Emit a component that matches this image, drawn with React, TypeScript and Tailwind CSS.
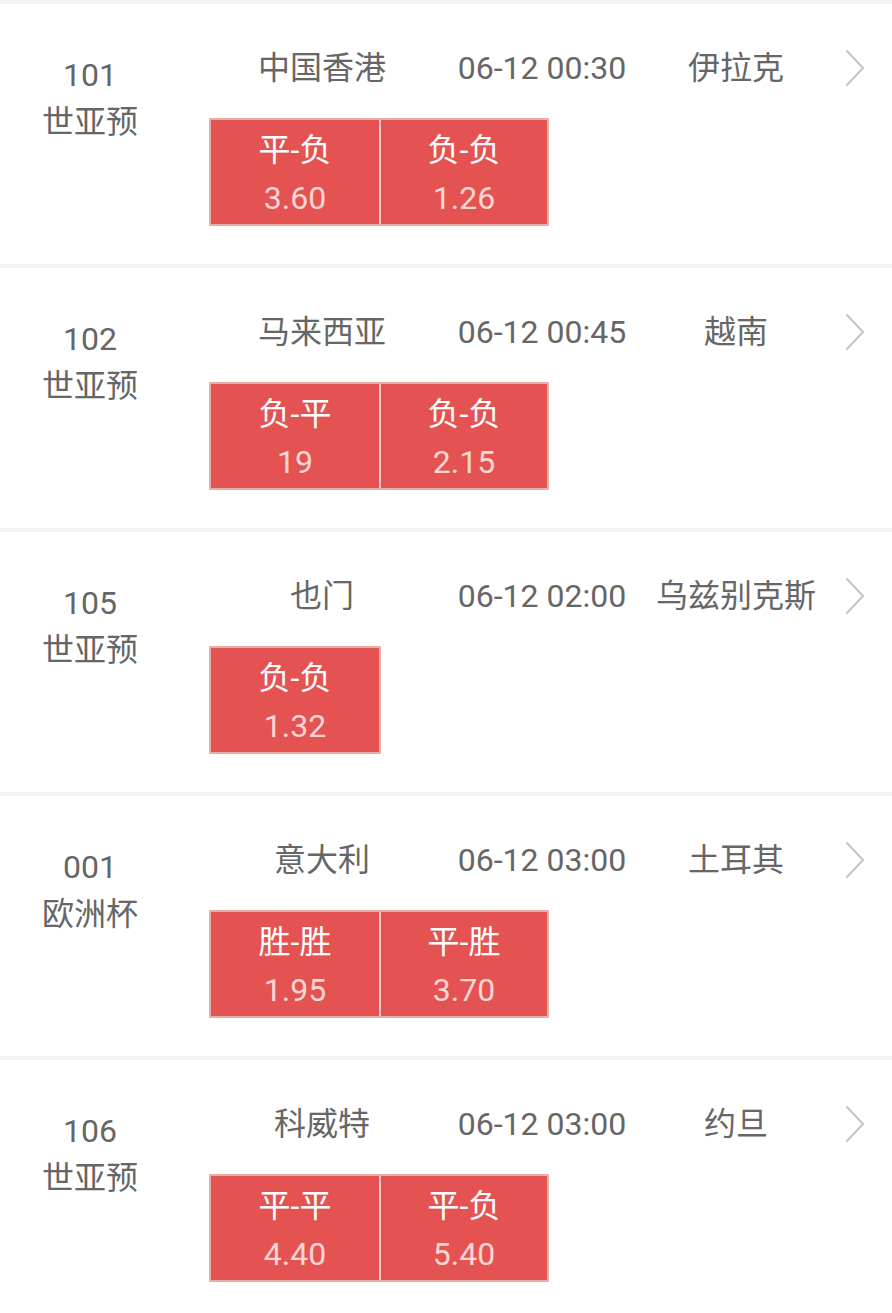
import React from 'react';

interface Odd {
  label: string;
  value: string;
}

interface Match {
  no: string;
  league: string;
  home: string;
  time: string;
  away: string;
  odds: Odd[];
}

const matches: Match[] = [
  { no: '101', league: '世亚预', home: '中国香港', time: '06-12 00:30', away: '伊拉克', odds: [{ label: '平-负', value: '3.60' }, { label: '负-负', value: '1.26' }] },
  { no: '102', league: '世亚预', home: '马来西亚', time: '06-12 00:45', away: '越南', odds: [{ label: '负-平', value: '19' }, { label: '负-负', value: '2.15' }] },
  { no: '105', league: '世亚预', home: '也门', time: '06-12 02:00', away: '乌兹别克斯', odds: [{ label: '负-负', value: '1.32' }] },
  { no: '001', league: '欧洲杯', home: '意大利', time: '06-12 03:00', away: '土耳其', odds: [{ label: '胜-胜', value: '1.95' }, { label: '平-胜', value: '3.70' }] },
  { no: '106', league: '世亚预', home: '科威特', time: '06-12 03:00', away: '约旦', odds: [{ label: '平-平', value: '4.40' }, { label: '平-负', value: '5.40' }] },
];

const Chevron = () => (
  <svg width="22" height="38" viewBox="0 0 22 38" fill="none">
    <path d="M3 2 L19 19 L3 36" stroke="#c4c4c4" strokeWidth="2" strokeLinecap="round" strokeLinejoin="round" />
  </svg>
);

const MatchRow: React.FC<{ m: Match }> = ({ m }) => (
  <div className="flex h-[264px] border-t-4 border-[#f2f2f2] bg-white">
    <div className="w-[180px] shrink-0 pt-[48px] text-center text-[32px] leading-[47px] text-[#666]">
      <div>{m.no}</div>
      <div>{m.league}</div>
    </div>
    <div className="flex-1 pl-[29px] pt-[44px]">
      <div className="flex items-center text-[32px] leading-[40px] text-[#666]">
        <div className="w-[226px] text-center">{m.home}</div>
        <div className="w-[214px] text-center">{m.time}</div>
        <div className="w-[174px] whitespace-nowrap text-center">{m.away}</div>
        <div className="flex flex-1 pl-[21px]">
          <Chevron />
        </div>
      </div>
      <div className="mt-[30px] flex">
        <div className="flex border-2 border-[#e3aeac]">
          {m.odds.map((o, i) => (
            <div
              key={i}
              className={`h-[104px] w-[168px] bg-[#e45352] pt-[10px] text-center text-[32px] ${i > 0 ? 'border-l-2 border-[#f4c9c7]' : ''}`}
            >
              <div className="leading-[40px] text-white">{o.label}</div>
              <div className="mt-[8px] leading-[40px] text-[#fbd6d3]">{o.value}</div>
            </div>
          ))}
        </div>
      </div>
    </div>
  </div>
);

export default function App() {
  return (
    <div className="min-h-[1313px] w-[892px] bg-white font-['Roboto','Noto_Sans_CJK_SC',sans-serif]">
      {matches.map((m) => (
        <MatchRow key={m.no} m={m} />
      ))}
    </div>
  );
}
